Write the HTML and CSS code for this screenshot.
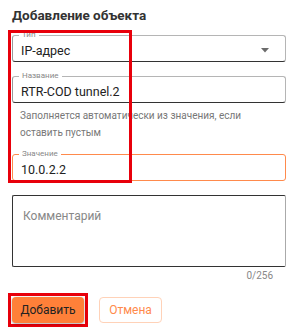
FILE: index.html
```html
<!DOCTYPE html>
<html lang="ru">
<head>
<meta charset="utf-8">
<link rel="stylesheet" href="styles.css">
</head>
<body>
<div class="panel">
  <h1 class="title">Добавление объекта</h1>
  <div class="group">
    <div class="mark"></div>
    <div class="field">
      <span class="label">Тип</span>
      <span class="value">IP-адрес</span>
      <svg class="caret" width="8" height="5" viewBox="0 0 8 5"><path d="M0 0h8L4 4.5z" fill="#6b6b6b"/></svg>
    </div>
    <div class="field">
      <span class="label">Название</span>
      <span class="value">RTR-COD tunnel.2</span>
    </div>
    <p class="help">Заполняется автоматически из значения, если оставить пустым</p>
    <div class="field focus">
      <span class="label">Значение</span>
      <span class="value">10.0.2.2</span>
    </div>
  </div>
  <div class="area">
    <span class="placeholder">Комментарий</span>
  </div>
  <div class="counter">0/256</div>
  <div class="actions">
    <div class="btnwrap"><button class="btn primary">Добавить</button></div>
    <button class="btn ghost">Отмена</button>
  </div>
</div>
</body>
</html>
```
FILE: styles.css
```css
html, body { margin: 0; padding: 0; background: #fff; }
body { font-family: Roboto, "Noto Sans", sans-serif; color: #222; width: 302px; height: 333px; overflow: hidden; }
.panel { padding: 6px 16px 0 12px; }
.title { margin: 0; font-size: 13.5px; font-weight: 700; color: #333; line-height: 18px; }
.group { position: relative; margin-top: 11px; }
.mark { position: absolute; left: -4px; top: -5px; width: 118px; height: 147px; border: 3px solid #e8000b; pointer-events: none; z-index: 2; }
.field { position: relative; height: 27px; box-sizing: border-box; border: 1px solid #b5b5b5; border-bottom-color: #333; border-left-color: #999; border-radius: 3px; display: flex; align-items: center; padding: 0 8px; }
.field + .field { margin-top: 14px; }
.label { position: absolute; left: 6px; top: -6px; font-size: 8px; line-height: 10px; color: #888; background: #fff; padding: 0 3px; }
.value { font-size: 12.5px; color: #222; padding-top: 3px; }
.caret { position: absolute; right: 16px; top: 12px; }
.help { margin: 4px 0 0 8px; font-size: 10px; line-height: 17px; color: #777; }
.focus { margin-top: 13px; border-color: #ff8a4c; }
.area { margin-top: 14px; height: 72px; box-sizing: border-box; border: 1px solid #333; border-right-color: #aaa; border-radius: 2px; padding: 9px 10px; }
.placeholder { font-size: 12px; color: #888; }
.counter { text-align: right; font-size: 10px; color: #888; margin-top: 3px; padding-right: 13px; line-height: 12px; }
.actions { display: flex; align-items: center; gap: 11px; margin-top: 11px; margin-left: -4px; }
.btnwrap { border: 3px solid #e8000b; padding: 1px; display: flex; }
.btn { font-family: Roboto, "Noto Sans", sans-serif; font-size: 12px; border-radius: 4px; height: 26px; cursor: pointer; padding: 0; }
.primary { background: #ff8039; color: #222; border: none; width: 72px; box-shadow: 0 1px 3px rgba(0,0,0,0.35); }
.ghost { background: #fff; color: #ff8a4c; border: 1px solid #ffd2b8; width: 63px; }
```
